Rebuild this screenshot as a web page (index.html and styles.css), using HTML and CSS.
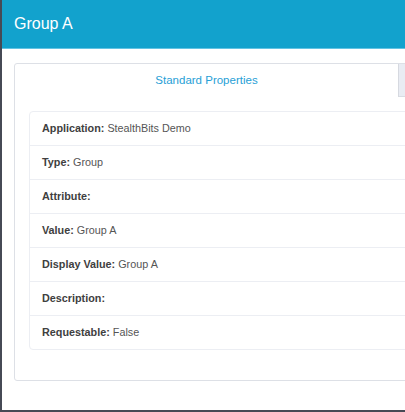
FILE: index.html
```html
<!DOCTYPE html>
<html>
<head>
<meta charset="utf-8">
<link rel="stylesheet" href="styles.css">
</head>
<body>
<div class="modal">
  <div class="modal-header">Group A</div>
  <div class="panel">
    <div class="tabs">
      <div class="tab active">Standard Properties</div>
      <div class="tab inactive"></div>
    </div>
    <div class="tab-body">
      <div class="list">
        <div class="row"><span class="label">Application:</span> StealthBits Demo</div>
        <div class="row"><span class="label">Type:</span> Group</div>
        <div class="row"><span class="label">Attribute:</span></div>
        <div class="row"><span class="label">Value:</span> Group A</div>
        <div class="row"><span class="label">Display Value:</span> Group A</div>
        <div class="row"><span class="label">Description:</span></div>
        <div class="row"><span class="label">Requestable:</span> False</div>
      </div>
    </div>
  </div>
</div>
</body>
</html>
```

FILE: styles.css
```css
html, body {
  margin: 0;
  padding: 0;
}
body {
  background: #464a55;
  width: 405px;
  height: 412px;
  overflow: hidden;
  font-family: "Liberation Sans", Arial, sans-serif;
}
.modal {
  margin-left: 2px;
  width: 403px;
  height: 410px;
  background: #ffffff;
  overflow: hidden;
}
.modal-header {
  height: 48px;
  line-height: 48px;
  background: #12a2cd;
  border-bottom: 1px solid #62c3e3;
  color: #ffffff;
  font-size: 16px;
  padding-left: 12px;
}
.panel {
  margin: 14px 0 0 12px;
  width: 420px;
  border: 1px solid #dde0e6;
  border-radius: 3px;
  box-sizing: border-box;
}
.tabs {
  display: flex;
  height: 33px;
}
.tab {
  box-sizing: border-box;
  height: 33px;
}
.tab.active {
  width: 384px;
  border-right: 1px solid #d6d9e0;
  color: #27a0d6;
  font-size: 11.5px;
  line-height: 33px;
  text-align: center;
}
.tab.inactive {
  flex: 1;
  background: #e9ecf3;
  border-bottom: 1px solid #d8dce3;
}
.tab-body {
  padding: 14px 0 30px 14px;
}
.list {
  border: 1px solid #eceef3;
  border-radius: 4px;
}
.row {
  height: 33px;
  line-height: 33px;
  padding-left: 12px;
  font-size: 10.8px;
  color: #555555;
}
.row + .row {
  border-top: 1px solid #eceef3;
}
.label {
  font-weight: bold;
  color: #404040;
}
```
